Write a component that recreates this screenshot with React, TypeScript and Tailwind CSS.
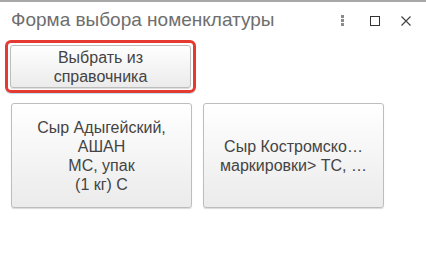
const btn =
  "flex flex-col items-center justify-center rounded-[3px] border border-[#bdbdbd] bg-gradient-to-b from-white to-[#ebebeb] shadow-[0_1px_1px_rgba(0,0,0,0.15)] text-[16px] leading-[19px] text-[#444] text-center";

const App = () => {
  return (
    <div className="w-[426px] h-[273px] bg-white border-t-2 border-[#a8a8a8] font-['Liberation_Sans',Arial,sans-serif]">
      <div className="flex items-center h-[36px] pl-[11px]">
        <h1 className="text-[19px] text-[#6e6e6e] pt-[1px]">Форма выбора номенклатуры</h1>
        <div className="ml-auto flex items-center mr-[15px] pt-[1px]">
          <span className="flex flex-col gap-[1px]">
            <span className="w-[3px] h-[3px] bg-[#8a8a8a]" />
            <span className="w-[3px] h-[3px] bg-[#8a8a8a]" />
            <span className="w-[3px] h-[3px] bg-[#8a8a8a]" />
          </span>
          <span className="ml-[26px] w-[10px] h-[10px] border-[1.5px] border-[#333]" />
          <svg className="ml-[21px]" width="10" height="10" viewBox="0 0 10 10">
            <path d="M0.5 0.5 L9.5 9.5 M9.5 0.5 L0.5 9.5" stroke="#444" strokeWidth="1.2" />
          </svg>
        </div>
      </div>

      <div className="ml-[5px] mt-[2px] w-[191px] h-[53px] rounded-[6px] border-[3px] border-[#e53a31] p-[2px] shadow-[0_1px_0_#bfe0f5]">
        <button className={`${btn} w-[181px] h-[43px]`}>
          <span>Выбрать из</span>
          <span>справочника</span>
        </button>
      </div>

      <div className="flex gap-[11px] pl-[11px] mt-[10px]">
        <button className={`${btn} w-[181px] h-[105px]`}>
          <span>Сыр Адыгейский,</span>
          <span>АШАН</span>
          <span>МС, упак</span>
          <span>(1 кг) С</span>
        </button>
        <button className={`${btn} w-[181px] h-[105px]`}>
          <span>Сыр Костромско…</span>
          <span>маркировки&gt; ТС, …</span>
        </button>
      </div>
    </div>
  );
};

export default App;
